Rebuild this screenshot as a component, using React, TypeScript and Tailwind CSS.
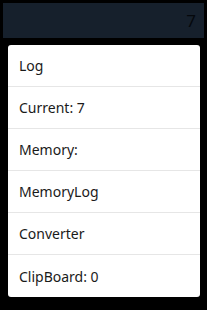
import React from "react";

const items = ["Log", "Current: 7", "Memory:", "MemoryLog", "Converter", "ClipBoard: 0"];

export default function App() {
  return (
    <div className="h-[310px] w-[207px] overflow-hidden bg-black font-['Noto_Sans','Open_Sans',sans-serif]">
      <div className="pt-[3px] px-[3px]">
        <div className="flex h-[35px] items-center justify-end bg-[#16202c] pr-[8px] text-[17px] text-[#05080c]">
          7
        </div>
      </div>
      <div className="mx-[8px] mt-[7px] w-[192px] overflow-hidden rounded-[3px] bg-white">
        {items.map((item, i) => (
          <div
            key={item}
            className={`flex h-[42px] items-center pl-[11px] text-[14px] text-[#1a1a1a] ${
              i < items.length - 1 ? "border-b border-[#e6e6e6]" : ""
            }`}
          >
            {item}
          </div>
        ))}
      </div>
    </div>
  );
}
